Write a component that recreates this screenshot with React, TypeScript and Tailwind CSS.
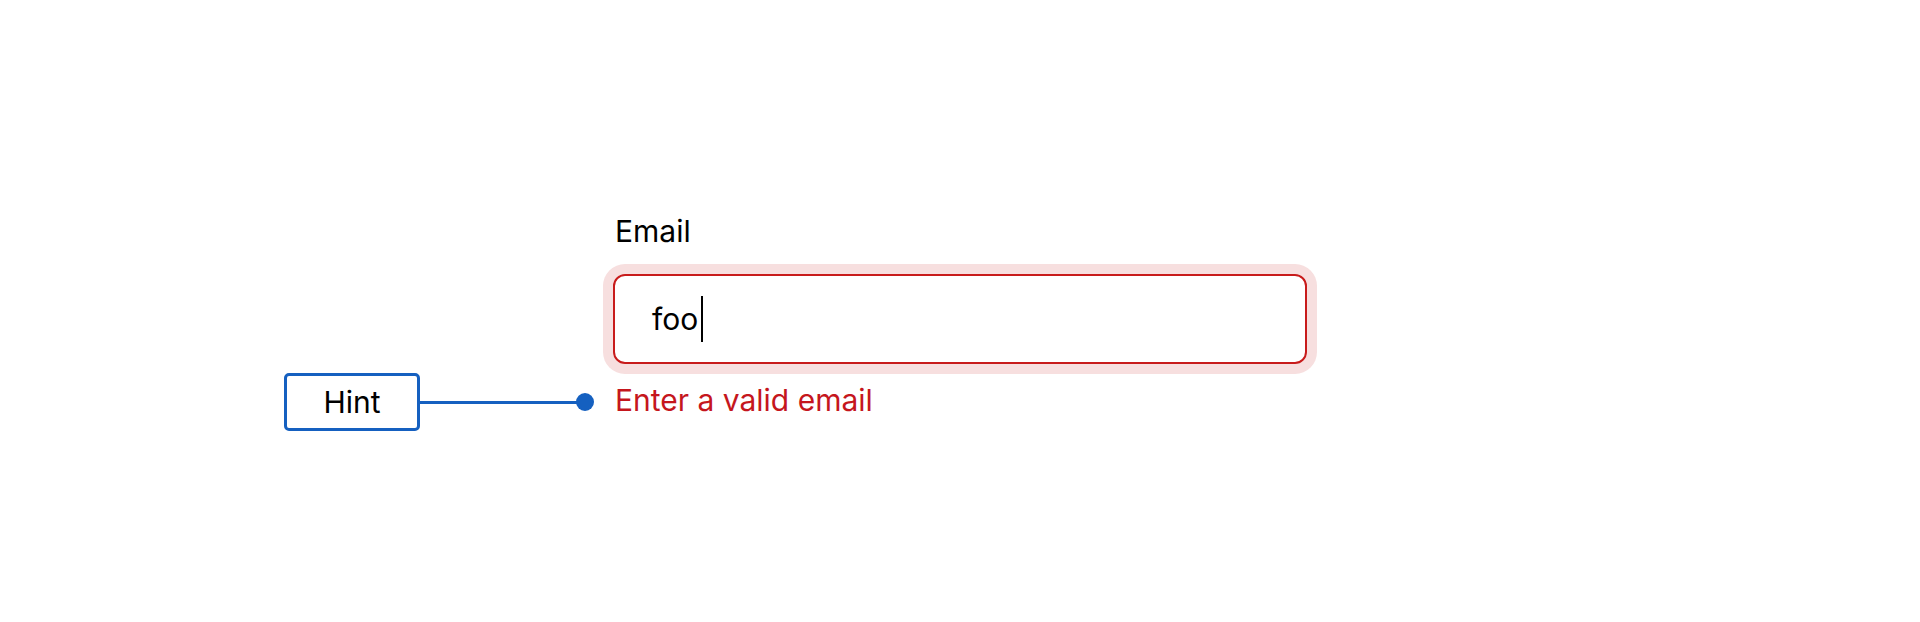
import React from "react";

export default function App() {
  return (
    <div className="w-full h-[622px] bg-white font-['Inter',sans-serif] pt-[213px] pl-[613px]">
      <div className="w-[694px]">
        <label className="block ml-[2px] text-[30px] leading-[36px] text-black">Email</label>

        {/* input in error state: red border with a soft pink focus ring */}
        <div className="mt-[25px] h-[90px] border-2 border-[#c81b1b] rounded-[12px] shadow-[0_0_0_10px_#f7dfdf] flex items-center pl-[37px] text-[30px] leading-[36px] text-black">
          <span>foo</span>
          <span className="ml-[3px] w-[2px] h-[46px] bg-black" />
        </div>

        {/* error message with its "Hint" callout on the left */}
        <div className="relative mt-[18px] ml-[2px] text-[30px] leading-[36px] text-[#c5161d]">
          <div className="absolute right-full top-[-9px] mr-[21px] flex items-center">
            <div className="w-[136px] h-[58px] border-[3px] border-[#1560c0] rounded-[5px] bg-white flex items-center justify-center text-[30px] leading-[36px] text-black">
              Hint
            </div>
            <div className="w-[157px] h-[3px] bg-[#1560c0]" />
            <div className="w-[18px] h-[18px] rounded-full bg-[#1560c0] -ml-[1px]" />
          </div>
          Enter a valid email
        </div>
      </div>
    </div>
  );
}
